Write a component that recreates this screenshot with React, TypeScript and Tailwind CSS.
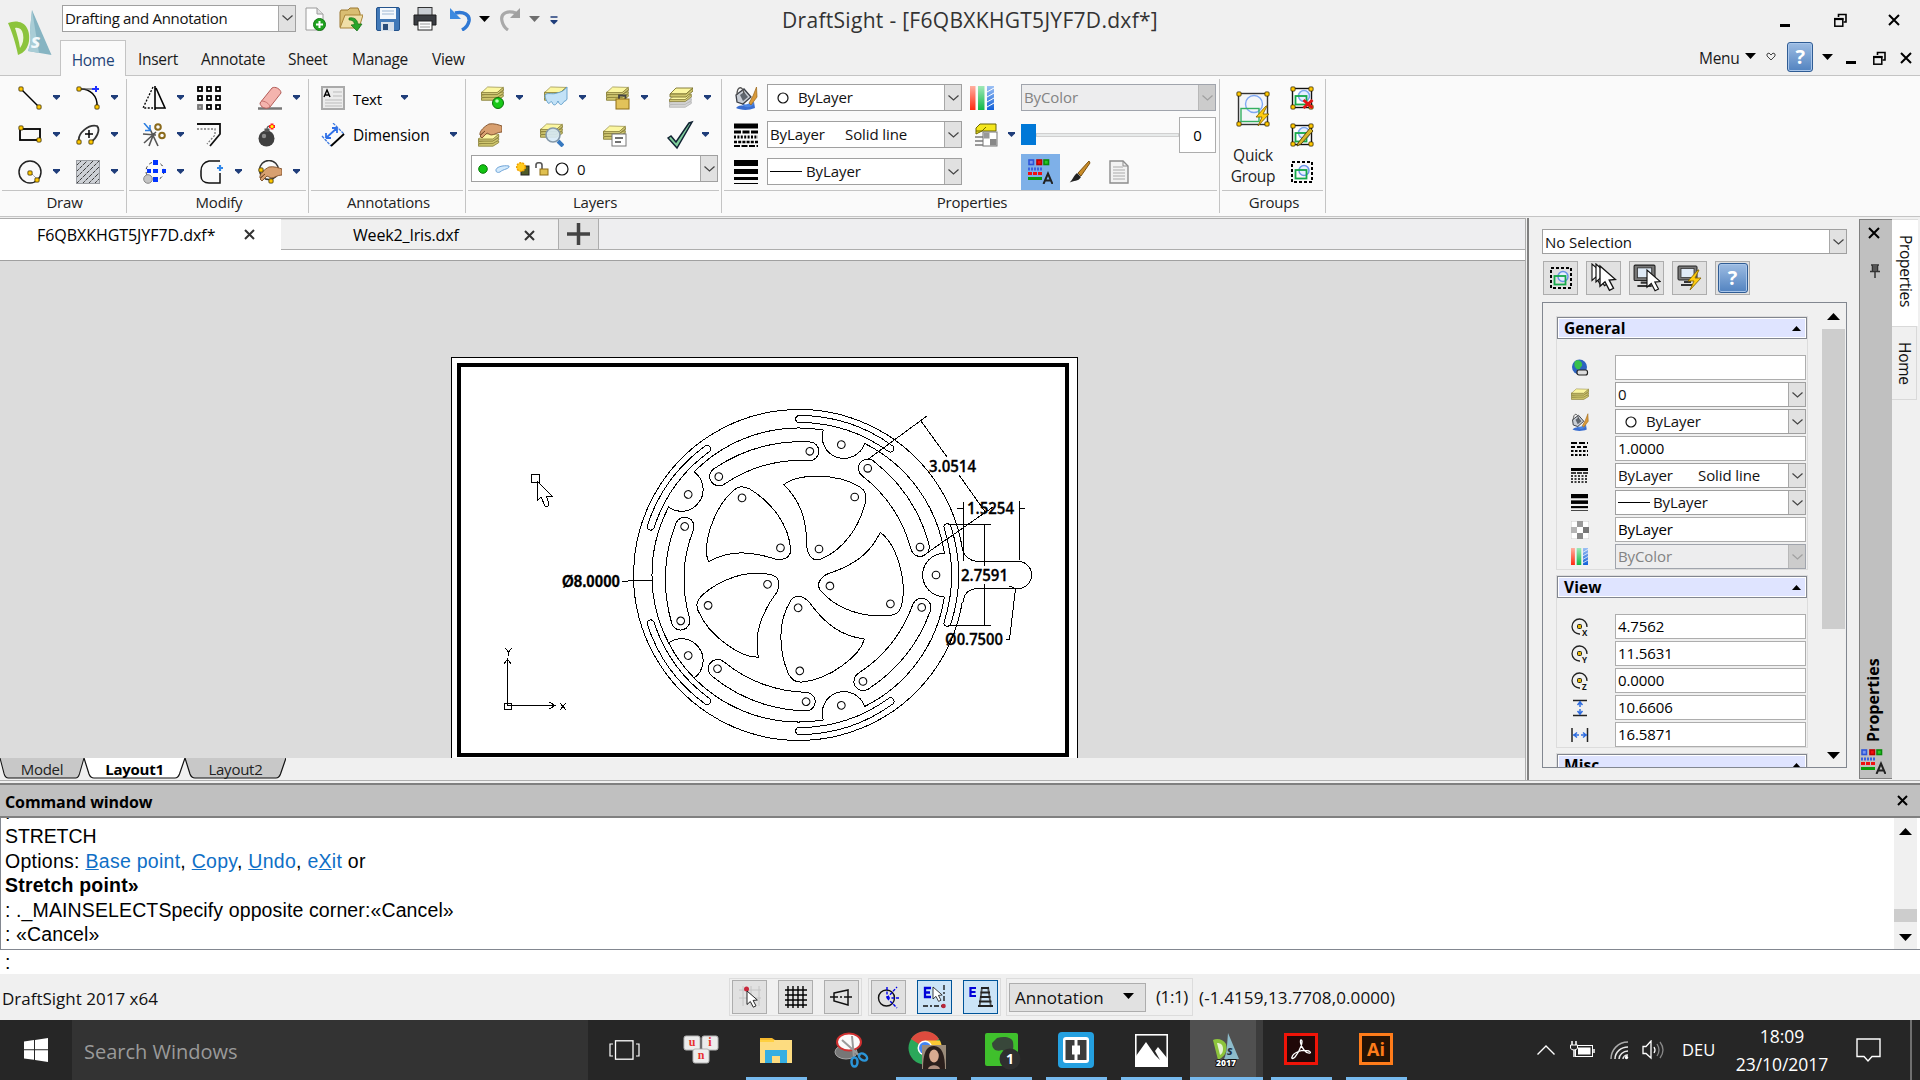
import React from "react";

type Kids = { children?: React.ReactNode; className?: string };

/* ---------- small building blocks ---------- */

const Svg = ({ children, className = "", w = 24, h = 24, vb }: Kids & { w?: number; h?: number; vb?: string }) => (
  <svg width={w} height={h} viewBox={vb ?? `0 0 ${w} ${h}`} className={`block shrink-0 ${className}`} fill="none">
    {children}
  </svg>
);

const Drop = ({ className = "" }: Kids) => (
  <Svg w={7} h={5} className={className}>
    <path d="M0 0H7V1.5L3.5 5L0 1.5Z" fill="#1f3d7a" />
  </Svg>
);

const BigDrop = ({ className = "", color = "#000" }: Kids & { color?: string }) => (
  <Svg w={11} h={6} className={className}>
    <path d="M0 0H11L5.5 6Z" fill={color} />
  </Svg>
);

const Tool = ({ children, drop = true, className = "" }: Kids & { drop?: boolean }) => (
  <div className={`flex items-center gap-[11px] ${className}`}>
    {children}
    {drop && <Drop />}
  </div>
);

const Chevron = ({ color = "#444" }: { color?: string }) => (
  <Svg w={11} h={6}>
    <path d="M0.5 0.5L5.5 5L10.5 0.5" stroke={color} strokeWidth="1.2" />
  </Svg>
);

const Combo = ({ children, className = "", disabled = false }: Kids & { disabled?: boolean }) => (
  <div
    className={`flex shrink-0 items-stretch justify-between overflow-hidden whitespace-nowrap border ${
      disabled ? "border-[#a0a4ac] bg-[#ededee] text-[#838383]" : "border-[#a0a0a0] bg-white text-[#111]"
    } ${className}`}
  >
    <div className="flex items-center pl-[2px]">{children}</div>
    <div
      className={`flex w-[17px] shrink-0 items-center justify-center border-l ${
        disabled ? "border-[#b8b8b8] bg-[#cccccc]" : "border-[#a8a8a8] bg-[#e1e1e1]"
      }`}
    >
      <Chevron color={disabled ? "#a0a0a0" : "#444"} />
    </div>
  </div>
);

const Cross = ({ s = 11, color = "#000", w = 2 }: { s?: number; color?: string; w?: number }) => (
  <Svg w={s} h={s}>
    <path d={`M1 1L${s - 1} ${s - 1}M${s - 1} 1L1 ${s - 1}`} stroke={color} strokeWidth={w} />
  </Svg>
);

const Minimize = () => (
  <Svg w={10} h={13}>
    <rect y="10" width="10" height="3" fill="#000" />
  </Svg>
);

const Restore = () => (
  <Svg w={13} h={14}>
    <path d="M4.5 4V1.5H12V9H9.5M4 1.5H12.5" stroke="#000" strokeWidth="1.6" />
    <rect x="0.8" y="5.8" width="8" height="7.4" stroke="#000" strokeWidth="1.5" />
    <path d="M0 6H9.5" stroke="#000" strokeWidth="2.2" />
  </Svg>
);

const Help = ({ w = 26 }: { w?: number }) => (
  <div
    className={`flex items-center justify-center rounded-[3px] border border-[#2f5c94] bg-gradient-to-b from-[#9dbce2] to-[#5283c0] shadow-[inset_0_0_0_1px_#a9c6ea] ${
      w === 26 ? "h-[30px] w-[26px]" : "h-[30px] w-[30px]"
    }`}
  >
    <span className="text-[20px] font-bold leading-none text-white">?</span>
  </div>
);

/* ---------- icons ---------- */

const Dot = ({ x, y, r = 2.1 }: { x: number; y: number; r?: number }) => (
  <rect x={x - r} y={y - r} width={r * 2} height={r * 2} rx="1" fill="#ffc800" stroke="#3a2c00" strokeWidth="0.8" />
);

const Layers = ({ x = 0, y = 0, s = 1, gray = false }: { x?: number; y?: number; s?: number; gray?: boolean }) => (
  <g transform={`translate(${x} ${y}) scale(${s})`} strokeWidth="1">
    {[9, 6, 3].map((o) => (
      <path
        key={o}
        d={`M0.5 ${o + 3.5}V${o + 6}H17L23.5 ${o + 2}V${o}Z`}
        fill={gray ? "#d4d4d4" : "#cfc66e"}
        stroke={gray ? "#b5b5b5" : "#857c35"}
        strokeWidth="0.9"
      />
    ))}
    <path d="M0.5 7L7 1L23.5 1.5L17 7Z" fill="#fbf6a0" stroke="#9a914a" strokeWidth="0.8" />
    <path d="M0.5 7V9H17L23.5 4V1.5L17 7Z" fill="#d9d080" stroke="#857c35" strokeWidth="0.8" />
  </g>
);

const DsLogo = () => (
  <Svg w={44} h={46}>
    <path d="M0 13C5 11 10 11 14 13C20 16 22 24 21 31C20 38 16 43 10 45C8 34 4 22 0 13Z" fill="#8cc43c" />
    <path d="M7 18C11 17 14 19 15 24C16 29 15 34 12 38C11 31 9 24 7 18Z" fill="#f0f5e2" />
    <path d="M24 0L43.500 45L20 41C23 34 23 27 22 20Z" fill="#86b4c2" />
    <path d="M24 0L31 43L20 41C23 34 23 27 22 20Z" fill="#a9cdd6" />
    <text x="23" y="38" fontSize="20" fontWeight="700" fontStyle="italic" fill="#f3fafc" fontFamily="Open Sans, sans-serif">
      s
    </text>
  </Svg>
);

const GroupBox = ({ mark }: { mark?: "x" | "pen" | "dash" }) => (
  <Svg>
    {mark === "dash" ? (
      <rect x="2" y="2" width="20" height="20" stroke="#000" strokeWidth="2" strokeDasharray="3 2" />
    ) : (
      <>
        <rect x="2.5" y="2.5" width="19" height="19" fill="#fff" stroke="#111" strokeWidth="1.4" />
        <circle cx="14" cy="10" r="5.5" fill="#e6efff" stroke="#7fa8ee" strokeWidth="1.5" />
        <Dot x={3} y={3} />
        <Dot x={21} y={3} />
        <Dot x={3} y={21} />
        <Dot x={21} y={21} />
      </>
    )}
    {mark === "dash" && <circle cx="14" cy="10.5" r="5" fill="#e6efff" stroke="#6b94e8" strokeWidth="1.5" />}
    <rect x="5.500" y="10" width="11" height="8.500" stroke="#15a84a" strokeWidth="1.800" />
    {mark === "x" && <path d="M13.500 14L22.500 22M22.500 14L13.500 22" stroke="#e01515" strokeWidth="3" />}
    {mark === "pen" && <path d="M8 20L20 5L23 8L11 21L7 23Z" fill="#d8b52a" stroke="#5a4a10" />}
  </Svg>
);

const PaintPot = ({ s = 24 }: { s?: number }) => (
  <Svg w={s} h={s} vb="0 0 24 24">
    <path d="M2 22C6 17 12 22 20 16L21 22C14 25 6 24 2 22Z" fill="#3a6ed0" />
    <path d="M7 17C12 20 17 18 18 12L20 18C16 23 10 22 7 17Z" fill="#4d86e2" />
    <path d="M2 9L10 3L17 11L9 18L3 16Z" fill="#c9ced6" stroke="#3c4048" strokeWidth="1.3" />
    <path d="M6 9L10 6L14 11L9 15Z" fill="#5f666f" />
    <path d="M3 9C3 0 9 -1 10 8" stroke="#555" strokeWidth="1.3" />
    <path d="M22.500 1L23 11L17 19L15 17L19 10Z" fill="#d99a3a" stroke="#9a6416" strokeWidth="0.7" />
  </Svg>
);

const LineStyles = ({ s = 24 }: { s?: number }) => (
  <Svg w={s} h={s} vb="0 0 24 24">
    <path d="M0 3H24" stroke="#000" strokeWidth="5" />
    <path d="M0 9H24" stroke="#000" strokeWidth="3" strokeDasharray="7 1.5" />
    <path d="M0 14H24" stroke="#000" strokeWidth="3" strokeDasharray="2 1.4" />
    <path d="M0 19H24" stroke="#000" strokeWidth="2.500" strokeDasharray="3 1.2" />
    <path d="M0 23H24" stroke="#000" strokeWidth="2" strokeDasharray="6 1.5" />
  </Svg>
);

const LineWeights = ({ s = 24 }: { s?: number }) => (
  <Svg w={s} h={s} vb="0 0 24 24">
    <rect width="24" height="6" fill="#000" />
    <rect y="9" width="24" height="5" fill="#000" />
    <rect y="17" width="24" height="3" fill="#000" />
    <rect y="23" width="24" height="1" fill="#000" />
  </Svg>
);

const ColorBars = ({ s = 24, className = "" }: { s?: number; className?: string }) => (
  <Svg w={s} h={s} vb="0 0 24 24" className={className}>
    <defs>
      <linearGradient id="cbR" x2="0" y2="1"><stop stopColor="#ffb0a0" /><stop offset="1" stopColor="#ff2a10" /></linearGradient>
      <linearGradient id="cbG" x2="0" y2="1"><stop stopColor="#9fe8b8" /><stop offset="1" stopColor="#10b848" /></linearGradient>
      <linearGradient id="cbB" x2="0" y2="1"><stop stopColor="#9cc0f4" /><stop offset="1" stopColor="#1060d8" /></linearGradient>
    </defs>
    <rect width="5.5" height="24" fill="url(#cbR)" />
    <rect x="8" width="6.5" height="24" fill="url(#cbG)" />
    <rect x="17" width="7" height="24" fill="url(#cbB)" />
    <path d="M17 6L24 2M17 11L24 7M17 16L24 12M17 21L24 17" stroke="#fff" strokeWidth="1" />
  </Svg>
);

const PropsA = () => (
  <Svg w={25} h={25}>
    <rect x="1" y="1" width="4.500" height="4.500" fill="#7b97ef" stroke="#2d55d8" strokeWidth="1.6" />
    <rect x="9" y="1" width="4.500" height="4.500" fill="#f01010" stroke="#b00" strokeWidth="1.6" />
    <rect x="16" y="1" width="4.500" height="4.500" fill="#27c827" stroke="#0a8a0a" strokeWidth="1.6" />
    <path d="M0 10H14" stroke="#3b62e0" strokeWidth="3" strokeDasharray="2 1" />
    <path d="M0 14.5H14" stroke="#f01010" strokeWidth="3" strokeDasharray="4 1" />
    <path d="M0 19.5H14" stroke="#0a9a0a" strokeWidth="3" />
    <path d="M15.5 25L20 14.5L24.5 25M17 21.5H23" stroke="#222" strokeWidth="2" />
  </Svg>
);

const Pointer = ({ x = 0, y = 0, s = 1 }: { x?: number; y?: number; s?: number }) => (
  <path
    d="M0 0V15L3.7 11.7L7 18L10 16.5L6.8 10.5L11.5 10Z"
    transform={`translate(${x} ${y}) scale(${s})`}
    fill="#fff"
    stroke="#111"
    strokeWidth="1"
  />
);

const Monitor = () => (
  <>
    <rect x="1" y="1" width="19" height="14" rx="1" fill="#777" stroke="#222" />
    <rect x="4" y="3.500" width="13" height="9" fill="#dfeaf6" stroke="#333" strokeWidth="0.8" />
    <path d="M7 17H14M4 20H17" stroke="#333" strokeWidth="2" />
  </>
);

const Bolt = ({ x = 0, y = 0, s = 1 }: { x?: number; y?: number; s?: number }) => (
  <path
    d="M10 0L0 11H6L2 20L13 8H7L11 0Z"
    transform={`translate(${x} ${y}) scale(${s})`}
    fill="#ffcc10"
    stroke="#8a6a00"
    strokeWidth="0.9"
  />
);

/* ---------- title bar and ribbon tabs ---------- */

const Header = () => (
  <header className="flex h-[75px] shrink-0 bg-[#f0f0f0]">
    <div className="w-[60px] shrink-0 pl-[8px] pt-[10px]">
      <DsLogo />
    </div>
    <div className="flex flex-1 flex-col">
      <div className="flex h-[40px] items-center">
        <Combo className="-mt-[4px] ml-[2px] h-[27px] w-[234px]">
          <span className="text-[15px] tracking-[-0.3px]">Drafting and Annotation</span>
        </Combo>
        <div className="ml-[9px] flex items-center pb-[2px]">
          <Svg>
            <path d="M1 1H12L18 7V23H1Z" fill="#fdfdfd" stroke="#9a9a9a" />
            <path d="M12 1V7H18" fill="#e0e0e0" stroke="#9a9a9a" />
            <circle cx="14.500" cy="17.500" r="6" fill="#1fa31f" stroke="#137813" />
            <path d="M14.500 14V21M11 17.500H18" stroke="#fff" strokeWidth="2" />
          </Svg>
          <Svg className="ml-[10px]">
            <path d="M1 5L2 3H9L11 1H19L21 6V10H6L3 20H1Z" fill="#d9bd72" stroke="#9c7830" />
            <path d="M6 8H24L20 21H1Z" fill="#f0dfa8" stroke="#a98438" />
            <path d="M10 11C15 10 18 12 19 17H23L18 24L12 18L15.500 17.500C15 14 13 13 10 13Z" fill="#2aa52a" stroke="#176e17" strokeWidth="0.7" />
          </Svg>
          <Svg className="ml-[13px]">
            <rect x="0.500" y="0.500" width="23" height="23" rx="1.500" fill="#4179b8" stroke="#24538c" />
            <rect x="4" y="1" width="16" height="11" fill="#f4f8fc" />
            <path d="M6 4H18M6 7H18" stroke="#9fb8d4" />
            <rect x="5" y="15" width="13" height="9" fill="#d7e0ea" />
            <rect x="7" y="17" width="5" height="6" fill="#2a4d7a" />
          </Svg>
          <Svg className="ml-[13px]">
            <rect x="5" y="0.500" width="14" height="9" fill="#c9ced4" stroke="#333" />
            <path d="M1 8H23V18H1Z" fill="#3a3d42" stroke="#1c1c1c" />
            <rect x="5" y="14" width="14" height="9" fill="#fff" stroke="#222" />
            <path d="M7 17H17M7 20H17" stroke="#999" />
          </Svg>
          <Svg className="ml-[13px]">
            <path d="M5 6C14 4 20 8 19 14C18 19 16 21 12 23" stroke="#2f78d4" strokeWidth="3.500" />
            <path d="M0 1V12H11Z" fill="#3d8ae0" />
          </Svg>
          <BigDrop className="ml-[5px]" />
          <Svg className="ml-[9px]">
            <path d="M17 6C9 3 1 6 3 14C4 19 6 21 9 23" stroke="#a9a9a9" strokeWidth="3.200" />
            <path d="M21 1V11H11Z" fill="#a0a0a0" />
          </Svg>
          <BigDrop className="ml-[6px]" color="#6e6e6e" />
          <Svg w={8} h={9} className="ml-[10px] mt-[3px]">
            <path d="M0.500 1H7.500" stroke="#1f3d7a" strokeWidth="1.500" />
            <path d="M0.500 4H7.500V5L4 8.500L0.500 5Z" fill="#1f3d7a" />
          </Svg>
        </div>
        <span className="ml-[224px] w-[998px] whitespace-nowrap pt-px text-[21px] tracking-[0.3px] text-[#333]">
          DraftSight - [F6QBXKHGT5JYF7D.dxf*]
        </span>
        <Minimize />
        <div className="ml-[44px]">
          <Restore />
        </div>
        <div className="ml-[41px]">
          <Cross s={12} />
        </div>
      </div>
      <div className="flex h-[35px] items-center text-[15.500px] tracking-[-0.3px] text-[#1a1a1a]">
        <div className="z-10 -mb-px flex h-[36px] w-[66px] items-center justify-center self-start border border-b-0 border-[#c4c4c4] bg-[#fafafa] pt-1 text-[#1f4478]">
          Home
        </div>
        <span className="ml-[12px] w-[63px] pt-[4px]">Insert</span>
        <span className="w-[87px] pt-[4px]">Annotate</span>
        <span className="w-[64px] pt-[4px]">Sheet</span>
        <span className="w-[80px] pt-[4px]">Manage</span>
        <span className="w-[60px] pt-[4px]">View</span>
        <span className="ml-[1207px] w-[46px] pt-[2px]">Menu</span>
        <BigDrop className="-mt-[3px]" />
        <Svg w={10} h={9} className="-mt-[2px] ml-[10px]">
          <path d="M5 8L1 4V2L3 1L5 3L7 1L9 2V4Z" stroke="#444" />
        </Svg>
        <div className="ml-[11px] pb-[2px]">
          <Help />
        </div>
        <BigDrop className="-mt-[2px] ml-[9px]" />
        <div className="ml-[13px]">
          <Minimize />
        </div>
        <div className="ml-[17px]">
          <Restore />
        </div>
        <div className="ml-[14px]">
          <Cross s={12} />
        </div>
      </div>
    </div>
  </header>
);

/* ---------- ribbon ---------- */

const Group = ({ label, children, className = "" }: Kids & { label: string }) => (
  <section className={`flex shrink-0 flex-col border-r border-[#c4c4c4] ${className}`}>
    <div className="h-[114px]">{children}</div>
    <div className="mx-[2px] border-t border-[#c4c4c4]" />
    <div className="flex h-[22px] items-center justify-center pl-[3px] text-[15px] tracking-[-0.2px] text-[#222]">{label}</div>
  </section>
);

const Hatch = () => (
  <Svg>
    <rect width="24" height="24" fill="#cdd0d5" />
    <path
      d="M0 6L6 0M0 12L12 0M0 18L18 0M0 24L24 0M6 24L24 6M12 24L24 12M18 24L24 18"
      stroke="#3a3a3a"
      strokeWidth="1"
      strokeDasharray="4 1"
    />
    <rect x="0.500" y="0.500" width="23" height="23" stroke="#9a9da2" />
  </Svg>
);

const Hand = ({ y = 0 }: { y?: number }) => (
  <path
    d="M2 12C1 8 7 3 11 1C16 0 21 2 24 3V9C19 9 17 12 13 12L9 10L4 15L2 13L7 8Z"
    transform={`translate(0 ${y})`}
    fill="#d8a070"
    stroke="#7d4e28"
    strokeWidth="0.9"
  />
);

const Ribbon = () => (
  <div className="flex h-[142px] shrink-0 border-b border-t border-[#c4c4c4] bg-[#fafafa] pb-[3px] pt-[3px]">
    <Group label="Draw" className="w-[127px]">
      <div className="flex h-[37px] items-center gap-4 pl-[18px]">
        <Tool>
          <Svg><path d="M3 3L21 21" stroke="#000" strokeWidth="1.500" /><Dot x={3} y={3} /><Dot x={21} y={21} /></Svg>
        </Tool>
        <Tool>
          <Svg>
            <path d="M3 3C14 2 22 10 21 21" stroke="#000" strokeWidth="1.500" />
            <path d="M3 3H17" stroke="#555" strokeWidth="1.200" />
            <path d="M16 3H23M20 0V6" stroke="#2030ff" strokeWidth="2" />
            <Dot x={3} y={3} /><Dot x={21} y={21} />
          </Svg>
        </Tool>
      </div>
      <div className="flex h-[37px] items-center gap-4 pl-[18px]">
        <Tool>
          <Svg><rect x="2" y="6" width="20" height="11" stroke="#000" strokeWidth="1.800" /><Dot x={3} y={5} /><Dot x={21} y={17} /></Svg>
        </Tool>
        <Tool>
          <Svg>
            <path d="M3 19C1 10 13 1 21 3C25 7 20 16 15 19" stroke="#333" strokeWidth="1.800" />
            <path d="M13 7V15M9 11H17" stroke="#000" strokeWidth="1.500" />
            <Dot x={3} y={19} /><Dot x={15} y={19} />
          </Svg>
        </Tool>
      </div>
      <div className="flex h-[37px] items-center gap-4 pl-[18px]">
        <Tool>
          <Svg><circle cx="12" cy="12" r="11" stroke="#222" strokeWidth="1.500" /><path d="M12 12L20 20" stroke="#888" strokeDasharray="2 1" /><Dot x={12} y={13} /><Dot x={19} y={20} /></Svg>
        </Tool>
        <Tool><Hatch /></Tool>
      </div>
    </Group>

    <Group label="Modify" className="w-[182px]">
      <div className="grid grid-cols-[55px_61px_42px] pl-[15px]">
        <Tool className="h-[37px]">
          <Svg>
            <path d="M11 1L1 22H11" stroke="#000" strokeDasharray="2 1.500" strokeWidth="1.300" />
            <path d="M13 0V24M14 2L23 22H13" stroke="#000" strokeWidth="1.600" />
          </Svg>
        </Tool>
        <Tool drop={false}>
          <Svg>
            {[0, 9, 18].map((y) => [0, 9, 18].map((x) => (
              <rect key={`${x}-${y}`} x={x + 1} y={y + 1} width="4" height="4" stroke={x === 0 && y === 18 ? "#777" : "#000"} fill={x === 0 && y === 18 ? "#aaa" : "none"} strokeWidth="1.800" />
            )))}
          </Svg>
        </Tool>
        <Tool>
          <Svg>
            <path d="M0 22.500H24" stroke="#777" strokeWidth="2.500" />
            <path d="M2 17L14 2C17 0 23 3 23 7L12 21C8 24 2 21 2 17Z" fill="#f4b4ae" stroke="#b25c58" />
            <path d="M3 15C7 15 11 17 12 21" stroke="#c87470" />
          </Svg>
        </Tool>
        <Tool className="h-[37px]">
          <Svg>
            <path d="M1 11L14 12M2 20L14 9M16 23L8 6M7 23L12 10" stroke="#555" strokeWidth="1.600" />
            <circle cx="16" cy="4" r="2.800" stroke="#8a6a1c" strokeWidth="2" /><circle cx="20" cy="12.500" r="2.800" stroke="#8a6a1c" strokeWidth="2" />
            <path d="M2 0L8 7M8 2V7.500H3" stroke="#2b7de0" strokeWidth="1.500" />
          </Svg>
        </Tool>
        <Tool drop={false}>
          <Svg>
            <path d="M0 1H23V11L13 23" stroke="#111" strokeWidth="1.800" />
            <path d="M0 6H18V12L10 21" stroke="#777" strokeDasharray="2 1.500" strokeWidth="1.300" />
          </Svg>
        </Tool>
        <Tool drop={false}>
          <Svg>
            <circle cx="8.500" cy="15.500" r="8" fill="#3f3f3f" /><circle cx="6" cy="13" r="2.200" fill="#8c8c8c" />
            <rect x="6.500" y="5.500" width="5" height="3.500" fill="#555" />
            <path d="M9 6C9 3 11 3 13 3" stroke="#555" strokeWidth="1.200" /><path d="M14 0.500V6.500M11 3.500H17" stroke="#f22" strokeWidth="3" /><circle cx="14" cy="3.500" r="1.500" fill="#ff0" />
          </Svg>
        </Tool>
        <Tool className="h-[37px]">
          <Svg>
            <circle cx="13" cy="11" r="9" stroke="#333" strokeDasharray="3 3" />
            <g fill="#0033ff"><rect x="11" width="5" height="5" /><rect x="5" y="9" width="4" height="4" /><rect x="11" y="9" width="5" height="4" /><rect x="20" y="9" width="4" height="4" /><rect x="11" y="17" width="5" height="5" /></g>
            <circle cx="6" cy="19" r="4.300" fill="#c4c4c4" stroke="#888" />
          </Svg>
        </Tool>
        <Tool className="pl-[3px]">
          <Svg>
            <path d="M20 1H9C4 2 1 6 1 11V16C1 20 4 23 9 23H20V13" stroke="#111" strokeWidth="1.500" />
            <path d="M20 5V11M17 8H23" stroke="#2f86e8" strokeWidth="2.200" />
          </Svg>
        </Tool>
        <Tool>
          <Svg><circle cx="11" cy="10" r="9.500" stroke="#333" strokeWidth="1.500" /><Hand y={6} /><Dot x={3} y={10} /><Dot x={13} y={21} /></Svg>
        </Tool>
      </div>
    </Group>

    <Group label="Annotations" className="w-[157px]">
      <div className="flex h-[37px] items-center pl-[12px] text-[15px] tracking-[-0.3px]">
        <Svg>
          <rect x="1" y="1" width="22" height="22" fill="#ececec" stroke="#aaa" strokeWidth="2" />
          <path d="M3 11L6 4L9 11M4.500 9H8" stroke="#000" strokeWidth="1.400" />
          <path d="M12 6H21M12 10H21M4 14H21M4 17H21M4 20H21" stroke="#bbb" />
        </Svg>
        <span className="ml-[8px] w-[48px] pt-[3px]">Text</span>
        <Drop />
      </div>
      <div className="flex h-[37px] items-center pl-[12px] text-[15.500px]">
        <Svg>
          <path d="M12 0L23 11M1 13L10 23" stroke="#3f7be0" strokeWidth="1.300" strokeDasharray="3 1" />
          <path d="M5 15L16 5M5 15V10M5 15H10M16 5H11M16 5V10" stroke="#2f70e8" strokeWidth="1.800" />
          <path d="M10 23L23 11" stroke="#000" strokeWidth="1.800" />
        </Svg>
        <span className="ml-[8px] w-[97px] pt-[3px] tracking-[-0.15px]">Dimension</span>
        <Drop />
      </div>
    </Group>

    <Group label="Layers" className="w-[256px]">
      <div className="flex h-[37px] items-center gap-[20.500px] pl-[15px]">
        <Tool><Svg><Layers s={0.95} /><circle cx="17" cy="17" r="5.500" fill="#18c818" stroke="#0b700b" /><circle cx="16" cy="15" r="1.800" fill="#b8ffb8" /></Svg></Tool>
        <Tool><Svg><Layers s={0.95} /><path d="M1 9C4 6 8 9 13 7C17 6 20 5 23 1V13C22 16 20 14 19 17C17 20 15 18 14 15C12 20 9 20 8 16C6 14 6 19 4 17C3 15 1 13 1 9Z" fill="#c3e2f7" stroke="#5d9cc8" strokeWidth="0.9" /></Svg></Tool>
        <Tool><Svg><Layers s={0.95} /><path d="M13 14V9.500H19.500V14" stroke="#444" strokeWidth="1.800" /><rect x="10" y="13" width="13" height="10" fill="#e2c25a" stroke="#8d6d17" /></Svg></Tool>
        <Tool><Svg><Layers s={0.95} y={7} gray /><path d="M1 8L7 2H24L17 8Z" fill="#fbf6a0" stroke="#7b7330" strokeWidth="0.9" /><path d="M1 8V11H17L24 5V2L17 8Z" fill="#cfc66e" stroke="#7b7330" strokeWidth="0.9" /></Svg></Tool>
      </div>
      <div className="flex h-[37px] items-center pl-[12px]">
        <Svg><Layers y={10} s={0.88} /><Hand y={0} /></Svg>
        <Svg className="ml-[38px]"><Layers s={0.95} /><circle cx="13" cy="12" r="7" fill="#d6eaf7" fillOpacity=".9" stroke="#8498a8" strokeWidth="1.600" /><path d="M18 18L23 23" stroke="#3779c0" strokeWidth="4" /></Svg>
        <Svg className="ml-[39px]"><Layers y={2} s={0.95} /><rect x="9" y="11" width="14" height="12" fill="#fff" stroke="#777" /><path d="M12 15H20M12 19H18" stroke="#444" strokeWidth="1.500" /></Svg>
        <Svg w={28} h={30} className="ml-[39px]"><path d="M2 18L5 16L10 22L23 3L26 2L11 28Z" fill="#7fcf9c" stroke="#123" strokeWidth="1.500" /></Svg>
        <Drop className="ml-[8px]" />
      </div>
      <Combo className="ml-[5px] mt-[2px] h-[27px] w-[247px]">
        <div className="flex items-center pl-[4px]">
          <Svg w={10} h={10}><circle cx="5" cy="5" r="4.300" fill="#12c412" stroke="#0a780a" /></Svg>
          <Svg w={15} h={9} className="ml-[7px]"><path d="M1 7C0 3 8 1 14 2C15 5 8 5 5 8C3 9 1 8 1 7Z" fill="#d3eafc" stroke="#6fa4d8" /></Svg>
          <Svg w={15} h={15} className="ml-[5px]"><rect x="6" y="5" width="8" height="9" fill="#4f5a28" stroke="#222" /><circle cx="6" cy="6" r="4.300" fill="#ffcb1f" stroke="#f0a000" strokeDasharray="2 1" strokeWidth="1.500" /></Svg>
          <Svg w={14} h={14} className="ml-[5px]"><path d="M1 6V3C1 0 7 0 7 3V7" stroke="#555" strokeWidth="1.600" /><rect x="5" y="7" width="8" height="6" fill="#e0c050" stroke="#8d6d17" /></Svg>
          <Svg w={14} h={14} className="ml-[6px]"><circle cx="7" cy="7" r="6" fill="#fff" stroke="#111" strokeWidth="1.200" /></Svg>
          <span className="ml-[8px] pt-px text-[15px]">0</span>
        </div>
      </Combo>
    </Group>

    <Group label="Properties" className="w-[498px]">
      <div className="flex h-[37px] items-center pl-[12px] text-[15px] tracking-[-0.1px]">
        <PaintPot />
        <Combo className="ml-[9px] h-[27px] w-[195px]">
          <Svg w={12} h={12} className="ml-[7px]"><circle cx="6" cy="6" r="5" stroke="#111" strokeWidth="1.200" /></Svg>
          <span className="ml-[9px]">ByLayer</span>
        </Combo>
        <ColorBars className="ml-[8px]" />
        <Combo disabled className="ml-[27px] h-[27px] w-[195px]">ByColor</Combo>
      </div>
      <div className="flex h-[37px] items-center pl-[12px] text-[15px] tracking-[-0.1px]">
        <LineStyles />
        <Combo className="ml-[9px] h-[27px] w-[195px]">
          <span className="w-[75px]">ByLayer</span>
          <span>Solid line</span>
        </Combo>
        <Svg className="ml-[12px]">
          <path d="M2 5L6 1H22V8H8L2 11Z" fill="#f4e61c" stroke="#6d6600" /><path d="M2 8H8L12 4" stroke="#6d6600" /><path d="M1 14H9M1 18H9M1 22H9" stroke="#999" strokeWidth="2" />
          <rect x="9" y="9" width="14" height="14" fill="#fff" stroke="#777" /><rect x="9.500" y="9.500" width="6" height="6" fill="#999" /><rect x="16" y="16" width="6.500" height="6.500" fill="#888" />
        </Svg>
        <Drop className="ml-[10px]" />
        <div className="ml-[6px] h-[21px] w-[15px] shrink-0 bg-[#0078d7]" />
        <div className="h-[4px] w-[143px] shrink-0 border border-[#d0d0d0] bg-[#e7eaea]" />
        <div className="flex h-[36px] w-[37px] shrink-0 items-center justify-center border border-[#adadad] bg-white pt-px">0</div>
      </div>
      <div className="flex h-[37px] items-center pl-[12px] text-[15px] tracking-[-0.1px]">
        <LineWeights />
        <Combo className="ml-[9px] h-[27px] w-[195px]">
          <div className="h-px w-[32px] bg-black" />
          <span className="ml-[4px]">ByLayer</span>
        </Combo>
        <div className="ml-[59px] flex h-[36px] w-[39px] items-center justify-center bg-[#7eb0e8]"><PropsA /></div>
        <Svg className="ml-[9px]"><path d="M20 1L9 13L12 16L21 3Z" fill="#c98c28" stroke="#7a5010" /><path d="M8 13L12 17C9 22 5 20 0 23C4 20 4 16 8 13Z" fill="#222" /></Svg>
        <Svg className="ml-[14px]"><path d="M3 1H16L21 6V23H3Z" fill="#f2f2f2" stroke="#8c8c8c" strokeWidth="1.400" /><path d="M16 1V6H21" stroke="#8c8c8c" /><path d="M6 7H16M6 10H18M6 13H18M6 16H18M6 19H18" stroke="#aaa" /></Svg>
      </div>
    </Group>

    <Group label="Groups" className="w-[106px]">
      <div className="flex h-full">
        <div className="flex w-[66px] flex-col items-center pt-[12px] text-[15.500px] leading-[21px] tracking-[-0.25px] text-[#222]">
          <Svg w={34} h={36}>
            <rect x="2.500" y="2.500" width="29" height="31" fill="#f4f6f8" stroke="#333" strokeWidth="1.400" />
            <circle cx="18" cy="13" r="8.500" stroke="#7fa8f4" strokeWidth="1.400" />
            <rect x="5" y="17.500" width="18" height="13" stroke="#34b060" strokeWidth="1.400" />
            <Dot x={3} y={3} /><Dot x={31} y={3} /><Dot x={3} y={33} /><Dot x={31} y={33} />
            <Bolt x={20} y={15} />
          </Svg>
          <span className="mt-[18px]">Quick</span>
          <span>Group</span>
        </div>
        <div className="flex flex-col gap-[13px] pl-[4px] pt-[7px]">
          <GroupBox mark="x" />
          <GroupBox mark="pen" />
          <GroupBox mark="dash" />
        </div>
      </div>
    </Group>
  </div>
);

/* ---------- document tabs ---------- */

const DocTabs = () => (
  <div className="shrink-0">
    <div className="flex h-[32px] border-t border-[#adadad] bg-[#eeeef0] text-[16px] text-black">
      <div className="flex w-[281px] items-center bg-white pl-[37px]">
        <span className="w-[207px] whitespace-nowrap tracking-[-0.05px]">F6QBXKHGT5JYF7D.dxf*</span>
        <Cross color="#333" />
      </div>
      <div className="flex w-[277px] items-center border-b border-t border-b-[#adadad] border-t-[#dcdcdc] bg-[#f0f0f0] pl-[72px] pt-px">
        <span className="w-[171px] whitespace-nowrap tracking-[-0.15px]">Week2_Iris.dxf</span>
        <Cross color="#333" />
      </div>
      <div className="flex w-[41px] items-center justify-center border border-t-0 border-[#adadad] bg-[#e1e1e1]">
        <Svg w={23} h={22}><path d="M11.500 0V22M0 11H23" stroke="#444" strokeWidth="3.500" /></Svg>
      </div>
      <div className="flex-1 border-b border-[#adadad]" />
    </div>
    <div className="h-[11px] border-b border-[#a0a0a0] bg-white" />
  </div>
);

/* ---------- drawing ---------- */

const CX = 799;
const CY = 575;
type P = [number, number];
const pol = (r: number, deg: number): P => {
  const a = (deg * Math.PI) / 180;
  return [CX + r * Math.cos(a), CY - r * Math.sin(a)];
};
const f = (p: P) => `${p[0].toFixed(2)} ${p[1].toFixed(2)}`;
const steps = [0, 72, 144, 216, 288];

const rimSlot = (k: number) => {
  const a = 17.9 + k;
  const b = -17.9 + k;
  return `M${f(pol(159.5, a))}A159.5 159.5 0 0 1 ${f(pol(159.5, b))}A3.5 3.5 0 0 1 ${f(pol(152.5, b))}A152.5 152.5 0 0 0 ${f(pol(152.5, a))}A3.5 3.5 0 0 1 ${f(pol(159.5, a))}`;
};

const wideSlot = (k: number) => {
  const p1 = pol(126.9, 57.2 + k);
  const p2 = pol(124.2, 13 + k);
  const m: P = [(p1[0] + p2[0]) / 2, (p1[1] + p2[1]) / 2];
  const nx = -(p2[1] - p1[1]);
  const ny = p2[0] - p1[0];
  const nl = Math.hypot(nx, ny);
  const o: P = [m[0] + (nx / nl) * 140.3, m[1] + (ny / nl) * 140.3];
  const off = (p: P, d: number): P => {
    const l = Math.hypot(p[0] - o[0], p[1] - o[1]);
    return [p[0] + ((p[0] - o[0]) / l) * d, p[1] + ((p[1] - o[1]) / l) * d];
  };
  return `M${f(off(p1, 9.3))}A157.3 157.3 0 0 1 ${f(off(p2, 9.3))}A9.3 9.3 0 0 1 ${f(off(p2, -9.3))}A138.7 138.7 0 0 0 ${f(off(p1, -9.3))}A9.3 9.3 0 0 1 ${f(off(p1, 9.3))}`;
};

const innerRing =
  `M${f(pol(147, -8.5))}` +
  steps.map((k) => `A21.7 21.7 0 0 1 ${f(pol(147, k + 8.5))}A147 147 0 0 0 ${f(pol(147, k + 63.5))}`).join("");

const Drawing = () => (
  <svg className="block w-full flex-1 bg-[#dcdcdc]" viewBox="0 261 1526 497" preserveAspectRatio="xMinYMin slice">
    <g shapeRendering="crispEdges" fill="none" stroke="#000">
      <rect x="451.500" y="357.500" width="626" height="420" fill="#fff" />
      <rect x="459" y="365" width="608" height="390" strokeWidth="4" />
      <path d={`M${f(pol(165.5, 8.7))}A165.5 165.5 0 1 0 ${f(pol(165.5, -9.5))}`} />
      <path d={innerRing} />
      <path d={`M${f(pol(147, 207.5))}A147 147 0 0 0 ${f(pol(147, 224.5))}`} />
      {steps.map((k) => (
        <g key={k}>
          <path d={rimSlot(k)} />
          <path d={wideSlot(k)} />
          <g transform={`rotate(${k} ${CX} ${CY})`}>
            <path d="M783.700 484.700C797 474 835 472 860 487C866 491 866 495 865.700 501C860 526 844 550 820 559.500C810 562 806 551 806.700 542C806 520 801 501 783.700 484.700Z" />
          </g>
        </g>
      ))}
      <path d="M962.500 550C965 557 971 561.300 977 561.300H1018A13.600 13.600 0 0 1 1018 588.600H977C968 589 964 594 963 602" />
      <path d="M867 460L927 416M921 421L947 457M959 475L986 513M927 553L993 507" />
      <path d="M963.500 502V561M1019.500 501V560M957 508.500H963M1019 508.500H1025" />
      <path d="M948 524.500H991M948 625.500H991M984.500 524V566M984.500 584V625" />
      <path d="M1009 586L1015.500 588.500L1009.500 639.500H1006" />
      <path d="M622 581.500L634 580.500H652" />
      <path d="M504.500 703.500h7v6h-7zM507.500 706V658M504 664L507.500 659L511 664M507 705.500H555M549 702L555 705.500L549 709" />
      <path d="M505 648L508.500 652L512 648M508.500 652V656M560 703L566 710M566 703L560 710" />
      <path d="M531.500 474.500h8v8h-8z" />
      <path d="M537 481V501L541 497L545 506H548L549 503L546 496H552Z" fill="#fff" />
    </g>
    <g fill="none" stroke="#000" strokeWidth="1.100">
      {steps.map((k) => (
        <g key={k} transform={`rotate(${k} ${CX} ${CY})`}>
          <circle cx="936" cy="575" r="3.800" />
          <circle cx={pol(126.9, 57.2)[0]} cy={pol(126.9, 57.2)[1]} r="3.800" />
          <circle cx={pol(124.2, 13)[0]} cy={pol(124.2, 13)[1]} r="3.800" />
          <circle cx="854.700" cy="497" r="3.800" />
          <circle cx="819" cy="549" r="3.800" />
        </g>
      ))}
    </g>
    <g fontFamily="Open Sans, sans-serif" fontSize="16" fontWeight="600" fill="#000" stroke="#000" strokeWidth="0.300">
      <text x="929" y="472" textLength="47" lengthAdjust="spacingAndGlyphs">3.0514</text>
      <text x="967" y="514" textLength="47" lengthAdjust="spacingAndGlyphs">1.5254</text>
      <text x="961" y="581" textLength="47" lengthAdjust="spacingAndGlyphs">2.7591</text>
      <text x="945" y="645" textLength="58" lengthAdjust="spacingAndGlyphs">Ø0.7500</text>
      <text x="562" y="586.500" textLength="58" lengthAdjust="spacingAndGlyphs" fontFamily="Liberation Sans, sans-serif" fontWeight="700">
        Ø8.0000
      </text>
    </g>
  </svg>
);

const SheetTabs = () => (
  <div className="flex h-[22px] shrink-0 bg-[#f0f0f0] text-[15px] tracking-[-0.25px]">
    {[
      { t: "Model", on: false },
      { t: "Layout1", on: true },
      { t: "Layout2", on: false },
    ].map(({ t, on }) => (
      <div key={t} className={`grid h-[21px] ${t === "Model" ? "w-[84px]" : "w-[101px]"}`}>
        <svg viewBox="0 0 101 21" preserveAspectRatio="none" className="col-start-1 row-start-1 h-[21px] w-full">
          <path d="M0 0L5 16Q6.500 20 10 20H91Q94 20 95.500 16L101 0" fill={on ? "#fff" : "#c8c8c8"} stroke="#111" strokeWidth="1.200" />
        </svg>
        <span className={`col-start-1 row-start-1 flex items-center justify-center pt-px leading-none ${on ? "font-bold text-black" : "text-[#222]"}`}>
          {t}
        </span>
      </div>
    ))}
  </div>
);

/* ---------- properties palette ---------- */

const Section = ({ title, children }: Kids & { title: string }) => (
  <div className="w-[252px] border border-[#dcdcdc]">
    <div className="flex h-[22px] items-center justify-between border border-[#82868f] bg-[#dfe4ff] pl-[6px] pr-[5px] shadow-[inset_0_0_0_1px_#fff]">
      <span className="pt-px text-[15.500px] font-bold leading-none tracking-[0.1px] text-black">{title}</span>
      <Svg w={9} h={5}><path d="M0 5L4.500 0L9 5Z" fill="#000" /></Svg>
    </div>
    <div className="flex flex-col gap-[2px] pt-[16px]">{children}</div>
  </div>
);

const Field = ({ icon, children, combo = false, disabled = false }: Kids & { icon: React.ReactNode; combo?: boolean; disabled?: boolean }) => (
  <div className="flex h-[25px] items-center text-[15px] tracking-[-0.1px] text-black">
    <div className="flex w-[58px] shrink-0 items-center pl-[14px]">{icon}</div>
    {combo ? (
      <Combo disabled={disabled} className="h-[25px] w-[191px]">{children}</Combo>
    ) : (
      <div className="flex h-[25px] w-[191px] items-center border border-[#adadad] bg-white pl-[2px]">{children}</div>
    )}
  </div>
);

const CenterIcon = ({ axis }: { axis: string }) => (
  <Svg w={18} h={18}>
    <path d="M9 16A7.500 7.500 0 1 1 16 9" stroke="#222" strokeWidth="1.300" />
    <rect x="6.500" y="6.500" width="4" height="4" rx="1" fill="#e8b800" stroke="#222" />
    <text x="11" y="17.500" fontSize="8" fontWeight="700" fill="#111" fontFamily="Open Sans, sans-serif">{axis}</text>
  </Svg>
);

const PanelBtn = ({ children, className = "" }: Kids) => (
  <div className={`flex h-[34px] w-[35px] items-center justify-center border border-[#adadad] bg-[#e1e1e1] ${className}`}>{children}</div>
);

const Palette = () => (
  <aside className="flex w-[393px] shrink-0 border-l-2 border-[#808080] bg-[#f0f0f0]">
    <div className="w-[330px] shrink-0 pl-[13px] pt-[11px]">
      <Combo className="h-[25px] w-[305px] text-[15px]">
        <span className="pt-px tracking-[-0.05px]">No Selection</span>
      </Combo>
      <div className="mt-[7px] flex gap-[8px] pl-px">
        <PanelBtn><GroupBox mark="dash" /></PanelBtn>
        <PanelBtn><Svg w={26} h={30}><Pointer x={1} y={1} s={1.1} /><Pointer x={5} y={1} s={1.2} /><Pointer x={9} y={3} s={1.35} /></Svg></PanelBtn>
        <PanelBtn><Svg w={28} h={30}><g transform="translate(0 1) scale(1.1)"><Monitor /></g><Pointer x={14} y={7} s={1.15} /></Svg></PanelBtn>
        <PanelBtn><Svg w={26} h={26}><Monitor /><Bolt x={11} y={5} /></Svg></PanelBtn>
        <PanelBtn><Help w={30} /></PanelBtn>
      </div>
      <div className="mt-[7px] flex h-[466px] w-[305px] overflow-hidden border border-[#828790]">
        <div className="flex w-[279px] shrink-0 flex-col gap-[5px] pl-[13px] pt-[13px]">
          <Section title="General">
            <Field icon={<Svg w={18} h={18}><circle cx="8.500" cy="8" r="7.500" fill="#2c63c0" /><path d="M4 2C8 0 12 3 11 7C8 9 10 12 6 10C3 8 3 5 4 2Z" fill="#37c04a" /><rect x="6" y="11" width="10.500" height="5" rx="2" fill="#ddd" stroke="#222" strokeWidth="1.200" /></Svg>} />
            <Field combo icon={<Svg w={18} h={13} vb="0 0 24 17"><Layers /></Svg>}>0</Field>
            <Field combo icon={<PaintPot s={18} />}>
              <Svg w={12} h={12} className="ml-[7px]"><circle cx="6" cy="6" r="5" stroke="#111" strokeWidth="1.200" /></Svg>
              <span className="ml-[9px]">ByLayer</span>
            </Field>
            <Field icon={<Svg w={17} h={14}><path d="M0 1H17" stroke="#000" strokeWidth="2" strokeDasharray="6 2" /><path d="M0 5H17" stroke="#000" strokeWidth="2" strokeDasharray="4 2" /><path d="M0 9H17M0 13H17" stroke="#000" strokeWidth="2" strokeDasharray="2.500 1.500" /></Svg>}>1.0000</Field>
            <Field combo icon={<Svg w={17} h={15}><path d="M0 1.500H17" stroke="#000" strokeWidth="3" /><path d="M0 5H17" stroke="#000" strokeWidth="1.500" strokeDasharray="5 1" /><path d="M0 8H17M0 11H17M0 14H17" stroke="#000" strokeWidth="1.600" strokeDasharray="2 1.500" /></Svg>}>
              <span className="w-[80px]">ByLayer</span>
              <span>Solid line</span>
            </Field>
            <Field combo icon={<LineWeights s={17} />}>
              <div className="h-px w-[32px] bg-black" />
              <span className="ml-[3px]">ByLayer</span>
            </Field>
            <Field icon={<Svg w={18} h={18}><rect width="18" height="18" fill="#fff" stroke="#ccc" /><rect x="6" width="6" height="6" fill="#999" /><rect y="6" width="6" height="6" fill="#b5b5b5" /><rect x="12" y="6" width="6" height="6" fill="#777" /><rect x="6" y="12" width="6" height="6" fill="#888" /></Svg>}>ByLayer</Field>
            <Field combo disabled icon={<ColorBars s={17} />}>ByColor</Field>
          </Section>
          <Section title="View">
            <Field icon={<CenterIcon axis="X" />}>4.7562</Field>
            <Field icon={<CenterIcon axis="Y" />}>11.5631</Field>
            <Field icon={<CenterIcon axis="Z" />}>0.0000</Field>
            <Field icon={<Svg w={18} h={18}><path d="M2 1.500H16M2 16.500H16" stroke="#222" strokeWidth="1.500" /><path d="M9 2V8M9 10V16M6.500 6L9 3L11.500 6M6.500 12L9 15L11.500 12" stroke="#2f6de0" strokeWidth="1.500" /></Svg>}>10.6606</Field>
            <Field icon={<Svg w={18} h={18}><path d="M1 2V16M16.500 2V16" stroke="#222" strokeWidth="1.500" /><path d="M2 9H8M10 9H16M6 6.500L3 9L6 11.500M12 6.500L15 9L12 11.500" stroke="#2f6de0" strokeWidth="1.500" /></Svg>}>16.5871</Field>
          </Section>
          <Section title="Misc" />
        </div>
        <div className="flex w-[23px] flex-col items-center">
          <Svg w={13} h={7} className="mt-[10px]"><path d="M0 7L6.500 0L13 7Z" fill="#000" /></Svg>
          <div className="mt-[9px] h-[300px] w-[23px] bg-[#cdcdcd]" />
          <Svg w={13} h={7} className="mt-[123px]"><path d="M0 0L6.500 7L13 0Z" fill="#000" /></Svg>
        </div>
      </div>
    </div>
    <div className="mt-px flex h-[560px] w-[33px] shrink-0 flex-col items-center border-b border-l border-t border-[#808080] bg-[#c0c0c0]">
      <div className="mr-[4px] mt-[7px]"><Cross s={12} /></div>
      <Svg w={10} h={14} className="mr-[2px] mt-[25px]"><path d="M1 1H9M2.500 1V7M7.500 1V7M0 7.500H10M5 8V14" stroke="#333" strokeWidth="1.500" /><rect x="3" y="1" width="4" height="6" fill="#555" /></Svg>
      <span className="mr-[6px] mt-[374px] h-[90px] rotate-180 whitespace-nowrap text-[16px] font-bold leading-[20px] tracking-[0.05px] text-black [writing-mode:vertical-rl]">Properties</span>
      <div className="mr-[5px] mt-[7px]"><PropsA /></div>
    </div>
    <div className="pt-px text-[15.500px] tracking-[-0.3px] text-[#111]">
      <div className="flex h-[107px] w-[26px] items-center justify-center border-t border-[#ddd] bg-white pb-[4px] [writing-mode:vertical-rl]">Properties</div>
      <div className="flex h-[74px] w-[25px] items-center justify-center border border-l-0 border-[#d9d9d9] bg-[#f0f0f0] [writing-mode:vertical-rl]">Home</div>
    </div>
  </aside>
);

/* ---------- command window ---------- */

const Opt = ({ children }: Kids) => <span className="text-[#0f6fc6]">{children}</span>;

const CommandWindow = () => (
  <div className="flex h-[194px] shrink-0 flex-col border-t border-[#b0b0b0] bg-[#f0f0f0] pt-px">
    <div className="mt-px flex h-[35px] shrink-0 items-center justify-between border-b-2 border-t-2 border-[#808080] bg-[#c0c0c0] pl-[5px] pr-[12px]">
      <span className="pt-[2px] text-[16px] font-bold tracking-[-0.1px] text-black">Command window</span>
      <Cross s={11} />
    </div>
    <div className="flex h-[132px] shrink-0 border-b border-l border-[#828790] bg-white font-['Liberation_Sans',sans-serif]">
      <div className="flex-1 overflow-hidden pl-[4px] text-[19.500px] leading-[24.400px] tracking-[0.12px] text-black">
        <div className="-mt-[18px] h-[24.400px]">:</div>
        <div className="tracking-[-0.1px]">STRETCH</div>
        <div className="tracking-[0.27px]">
          Options:{" "}
          <Opt><u>B</u>ase point</Opt>, <Opt><u>C</u>opy</Opt>, <Opt><u>U</u>ndo</Opt>, <Opt>e<u>X</u>it</Opt> or
        </div>
        <div className="font-bold tracking-[0.2px]">Stretch point»</div>
        <div>: ._MAINSELECTSpecify opposite corner:«Cancel»</div>
        <div>: «Cancel»</div>
      </div>
      <div className="mr-[3px] flex w-[23px] flex-col items-center bg-[#f0f0f0]">
        <Svg w={13} h={7} className="mt-[10px]"><path d="M0 7L6.500 0L13 7Z" fill="#000" /></Svg>
        <div className="mt-[74px] h-[13px] w-[23px] bg-[#cdcdcd]" />
        <Svg w={13} h={7} className="mt-[12px]"><path d="M0 0L6.500 7L13 0Z" fill="#000" /></Svg>
      </div>
    </div>
    <div className="flex-1 bg-white pl-[5px] font-['Liberation_Sans',sans-serif] text-[19.500px] leading-[24px] text-black">:</div>
  </div>
);

/* ---------- status bar ---------- */

const SBtn = ({ children, on = false }: Kids & { on?: boolean }) => (
  <div className={`flex h-[34px] w-[35px] items-center justify-center border ${on ? "border-[#005499] bg-[#cce4f7]" : "border-[#adadad] bg-[#e1e1e1]"}`}>{children}</div>
);

const StatusBar = () => (
  <div className="flex h-[46px] shrink-0 items-center bg-[#f0f0f0] pb-[2px] text-[17px] text-[#111]">
    <span className="w-[729px] shrink-0 whitespace-nowrap pl-[2px] pt-[5px]">DraftSight 2017 x64</span>
    <div className="mt-[2px] flex h-[38px] items-center gap-[11px] border border-[#dcdcdc] pl-[2px] pr-[2px]">
      <SBtn><Svg w={25} h={26}><path d="M6 2V22M14 2V22M22 2V22M2 6H24M2 14H24" stroke="#c4c4c4" /><circle cx="9.500" cy="5" r="2.500" fill="#c8283c" /><Pointer x={10} y={7} s={0.9} /></Svg></SBtn>
      <SBtn><Svg><path d="M4 1V23M9 1V23M14 1V23M19 1V23M1 5H23M1 10H23M1 15H23M1 20H23" stroke="#000" strokeWidth="1.400" /></Svg></SBtn>
      <SBtn><Svg><path d="M4 8L18 5V20L4 16Z" stroke="#111" strokeWidth="1.500" /><path d="M0 12H24" stroke="#111" strokeDasharray="8 2 2 2" strokeWidth="1.300" /></Svg></SBtn>
    </div>
    <div className="ml-[6px] mt-[2px] flex h-[38px] items-center gap-[11px] border border-[#dcdcdc] px-[2px]">
      <SBtn><Svg><circle cx="9.500" cy="13" r="8" stroke="#111" strokeWidth="1.400" /><path d="M10 13L20 2M10 13H23M10 13L20 23M10 2V13" stroke="#0000e8" strokeWidth="1.400" strokeDasharray="3 1.500" /></Svg></SBtn>
      <SBtn on><Svg><path d="M8 3H2V12H8M2 7.500H7" stroke="#0000d8" strokeWidth="2.300" /><path d="M21 0V18M0 21H19" stroke="#111" strokeDasharray="5 2 2 2" strokeWidth="1.300" /><Pointer x={10} y={2} s={0.8} /><circle cx="20.500" cy="21" r="2.300" fill="#b8283c" /></Svg></SBtn>
      <SBtn on><Svg><path d="M7 3H1.500V11H7M1.500 7H6.500" stroke="#0000d8" strokeWidth="2.200" /><path d="M13 2L10.500 22M19 2L22 22" stroke="#555" strokeWidth="1.800" /><path d="M12 3H20M11.500 7.500H21M11 12H21.500M10 16.500H22.500M9 21H24" stroke="#222" strokeWidth="2" /></Svg></SBtn>
    </div>
    <div className="ml-[5px] mt-[2px] flex h-[38px] w-[187px] shrink-0 items-center border border-[#dcdcdc] pl-[2px]">
      <div className="flex h-[29px] w-[137px] items-center justify-between border border-[#adadad] bg-[#e1e1e1] pl-[5px] pr-[11px]">
        <span className="pt-px tracking-[0.05px]">Annotation</span>
        <BigDrop className="-mt-[3px]" />
      </div>
      <span className="ml-[10px] whitespace-nowrap tracking-[-0.4px]">(1:1)</span>
    </div>
    <span className="ml-[6px] whitespace-nowrap pt-[4px] tracking-[0.12px]">(-1.4159,13.7708,0.0000)</span>
  </div>
);

/* ---------- taskbar ---------- */

const Task = ({ children, className = "", run = true, on = false }: Kids & { run?: boolean; on?: boolean }) => (
  <div className={`flex h-full shrink-0 flex-col items-center ${on ? "bg-[#505050]" : ""} ${className}`}>
    <div className="flex flex-1 items-center">{children}</div>
    <div className={`h-[3px] w-full ${run ? "bg-[#76b9ed]" : ""}`} />
  </div>
);

const Key = ({ x, y, c }: { x: number; y: number; c: string }) => (
  <>
    <rect x={x} y={y} width="16" height="14" rx="2" fill="#ececec" stroke="#b5b5b5" />
    <text x={x + 8} y={y + 10} textAnchor="middle" fontSize="12" fontWeight="700" fill="#e83030" fontFamily="Liberation Serif, serif">{c}</text>
  </>
);

const Taskbar = () => (
  <div className="flex h-[60px] shrink-0 items-center bg-[#262626] text-white">
    <div className="flex h-full w-[72px] items-center justify-center">
      <Svg w={24} h={24}><path d="M0 3.500L10 2V11.300H0ZM11 1.900L24 0V11.300H11ZM0 12.300H10V21.800L0 20.500ZM11 12.300H24V24L11 22Z" fill="#fff" /></Svg>
    </div>
    <div className="flex h-full w-[516px] items-center bg-[#333333] pl-[12px] pt-[3px] text-[20px] text-[#9a9a9a]">Search Windows</div>
    <Svg w={31} h={20} className="ml-[21px]"><rect x="6.500" y="0.800" width="17.500" height="18.400" stroke="#fff" strokeWidth="1.300" /><path d="M4 4H1V16H4M27 4H30V16H27" stroke="#fff" strokeWidth="1.200" /></Svg>
    <Svg w={36} h={30} className="ml-[43px]"><Key x={1} y={1} c="u" /><Key x={19} y={1} c="i" /><Key x={10} y={14} c="n" /></Svg>
    <Task className="ml-[27px] w-[61px]">
      <Svg w={32} h={26} className="-ml-[2px] mt-[3px]"><path d="M0 1H12L15 3V6H0Z" fill="#f5b82e" /><rect y="3" width="32" height="23" fill="#fddc80" /><rect y="3" width="14" height="2" fill="#ffd040" /><path d="M5 26V13H27V26H20V19H12V26Z" fill="#35aee2" /></Svg>
    </Task>
    <div className="flex w-[89px] justify-center">
      <Svg w={36} h={36}>
        <ellipse cx="12" cy="20" rx="11" ry="7" fill="#777" stroke="#aaa" />
        <ellipse cx="15" cy="10" rx="12" ry="8.500" fill="#fafafa" stroke="#d03030" strokeWidth="2" />
        <path d="M8 8L26 24M18 4L20 26" stroke="#9a9a9a" strokeWidth="2" />
        <ellipse cx="20.500" cy="30" rx="3" ry="4.500" stroke="#2b95d8" strokeWidth="2.500" /><ellipse cx="29" cy="25" rx="4.500" ry="3" transform="rotate(35 29 25)" stroke="#2b95d8" strokeWidth="2.500" />
      </Svg>
    </div>
    <Task className="w-[61px]">
      <Svg w={38} h={38} className="mt-[3px]">
        <circle cx="17" cy="17" r="16.500" fill="#2ba85a" />
        <path d="M17 17L3 8A16.500 16.500 0 0 1 31 8Z" fill="#dd4b3e" /><path d="M17 17V9.500H32A16.500 16.500 0 0 1 17 33.500Z" fill="#fcc934" />
        <circle cx="17" cy="17" r="7.500" fill="#fff" /><circle cx="17" cy="17" r="6" fill="#4285f4" />
        <rect x="14" y="14" width="24" height="24" fill="#9a8b7a" /><path d="M15 38C15 22 18 15 26 15C34 15 37 24 37 38Z" fill="#2a1f1c" /><ellipse cx="26" cy="25" rx="4.800" ry="6.500" fill="#d9ab90" /><path d="M20 38C21 33 31 33 32 38Z" fill="#b09080" />
      </Svg>
    </Task>
    <Task className="ml-[14px] w-[61px]">
      <Svg w={38} h={38} className="ml-[2px] mt-[4px]">
        <rect x="1" y="1" width="33" height="33" rx="2" fill="#3fc02c" />
        <path d="M8 11L13 6C20 4 28 5 29 10C30 16 29 22 24 22C20 22 20 18 18 18C13 20 8 18 8 11Z" fill="#38473a" />
        <circle cx="26" cy="27" r="10.500" fill="#2f2f2f" />
        <text x="26" y="32" textAnchor="middle" fontSize="14" fontWeight="700" fill="#fff" fontFamily="Open Sans, sans-serif">1</text>
      </Svg>
    </Task>
    <Task className="ml-[14px] w-[61px]">
      <Svg w={36} h={36} className="-ml-[2px] mt-[2px]"><rect width="36" height="36" rx="4" fill="#24a0e0" /><rect x="5" y="5" width="26" height="26" rx="3" fill="#fff" /><path d="M7.500 8H16.500V13.500H14V22.500H16.500V28H7.500ZM28.500 8H19.500V13.500H22V22.500H19.500V28H28.500Z" fill="#3c3c3c" /></Svg>
    </Task>
    <Task className="ml-[14px] w-[61px]">
      <Svg w={33} h={33} className="-ml-px mt-[3px]"><rect x="0.800" y="0.800" width="31.400" height="31.400" stroke="#fff" strokeWidth="1.600" /><path d="M1 22L11 8L20 21L25 26L20 17L23 13L32 24V32H1Z" fill="#fff" /></Svg>
    </Task>
    <Task on className="ml-[8px] w-[66px]">
      <Svg w={28} h={34} className="ml-[5px] mt-[3px]">
        <path d="M1 7C5 5 11 6 14 11C16 19 12 24 6 27Z" fill="#8cc43c" /><path d="M5 10C9 10 11 12 11 16C11 19 10 21 8 22Z" fill="#e6f2d2" /><path d="M16 0L27 26H12C15 20 15 12 16 0Z" fill="#8dbccb" />
        <text x="15" y="22" fontSize="12" fontWeight="700" fontStyle="italic" fill="#234" fontFamily="Open Sans, sans-serif">s</text>
        <text x="14" y="33" textAnchor="middle" fontSize="8.500" fontWeight="800" fill="#fff" stroke="#000" strokeWidth="1.600" paintOrder="stroke" fontFamily="Open Sans, sans-serif">2017</text>
      </Svg>
    </Task>
    <Task className="w-[7px] bg-[#3c3c3c]" />
    <Task className="ml-[8px] w-[61px]">
      <Svg w={34} h={32} className="-ml-[2px] mt-[1px]"><rect x="1.500" y="1.500" width="31" height="29" fill="#200808" stroke="#f01408" strokeWidth="3" /><path d="M8 24C9 20 17 16 25 18C29 20 24 22 20 17C16 12 16 7 17 7C20 7 16 18 11 24C9 26 7 26 8 24Z" stroke="#fff" strokeWidth="1.300" /></Svg>
    </Task>
    <Task className="ml-[14px] w-[61px]">
      <Svg w={34} h={32} className="-ml-px mt-[1px]"><rect x="1.500" y="1.500" width="31" height="29" fill="#261304" stroke="#ff7c1a" strokeWidth="3" /><text x="17" y="22.500" textAnchor="middle" fontSize="18" fontWeight="700" fill="#ff7c1a" fontFamily="Open Sans, sans-serif">Ai</text></Svg>
    </Task>
    <Svg w={18} h={10} className="ml-[130px]"><path d="M0.500 9.500L9 1L17.500 9.500" stroke="#fff" strokeWidth="1.400" /></Svg>
    <Svg w={25} h={18} className="ml-[15px]"><rect x="5.500" y="4.500" width="17" height="11" stroke="#fff" /><rect x="8" y="6.500" width="12.500" height="7" fill="#fff" /><path d="M24 8V12M2 0V4M6 0V4M4 9V16" stroke="#fff" strokeWidth="1.500" /><path d="M0.500 4H7.500V7Q7 9 4 9Q1 9 0.500 7Z" fill="#262626" stroke="#fff" /></Svg>
    <Svg w={19} h={19} className="ml-[15px]"><path d="M1 18C1 9 8 1 18 1" stroke="#aaa" strokeWidth="1.500" /><path d="M5 18C5 11 11 6 18 6M9 18C9 14 13 10 18 10M13 18C13 16 15 14 18 14" stroke="#e8e8e8" strokeWidth="1.500" /><circle cx="16.500" cy="16.500" r="1.700" fill="#fff" /></Svg>
    <Svg w={23} h={20} className="ml-[13px]"><path d="M1 6.500H4L9 1V18L4 13.500H1Z" stroke="#fff" strokeWidth="1.300" /><path d="M12 7Q14 10 12 13" stroke="#fff" strokeWidth="1.300" /><path d="M15 4Q19 10 15 16M18 2Q24 10 18 18" stroke="#888" strokeWidth="1.300" /></Svg>
    <span className="ml-[17px] w-[38px] text-[16.500px] tracking-[0.1px]">DEU</span>
    <div className="ml-[5px] flex w-[114px] flex-col items-center text-[17.500px] leading-[28px] tracking-[-0.05px]">
      <span>18:09</span>
      <span>23/10/2017</span>
    </div>
    <Svg w={25} h={25} className="ml-[17px]"><path d="M1 1H24V18.500H16L12 23L8 18.500H1Z" stroke="#fff" strokeWidth="1.400" /></Svg>
    <div className="ml-[29px] h-full w-[2px] bg-[#707070]" />
  </div>
);

export default function App() {
  return (
    <div className="flex h-[1080px] w-[1920px] flex-col overflow-hidden bg-[#f0f0f0] font-['Open_Sans',sans-serif]">
      <Header />
      <Ribbon />
      <div className="flex h-[563px] shrink-0 pt-px">
        <div className="flex w-[1526px] shrink-0 flex-col border-r border-[#adadad]">
          <DocTabs />
          <Drawing />
          <SheetTabs />
        </div>
        <div className="w-px shrink-0" />
        <Palette />
      </div>
      <CommandWindow />
      <StatusBar />
      <Taskbar />
    </div>
  );
}
